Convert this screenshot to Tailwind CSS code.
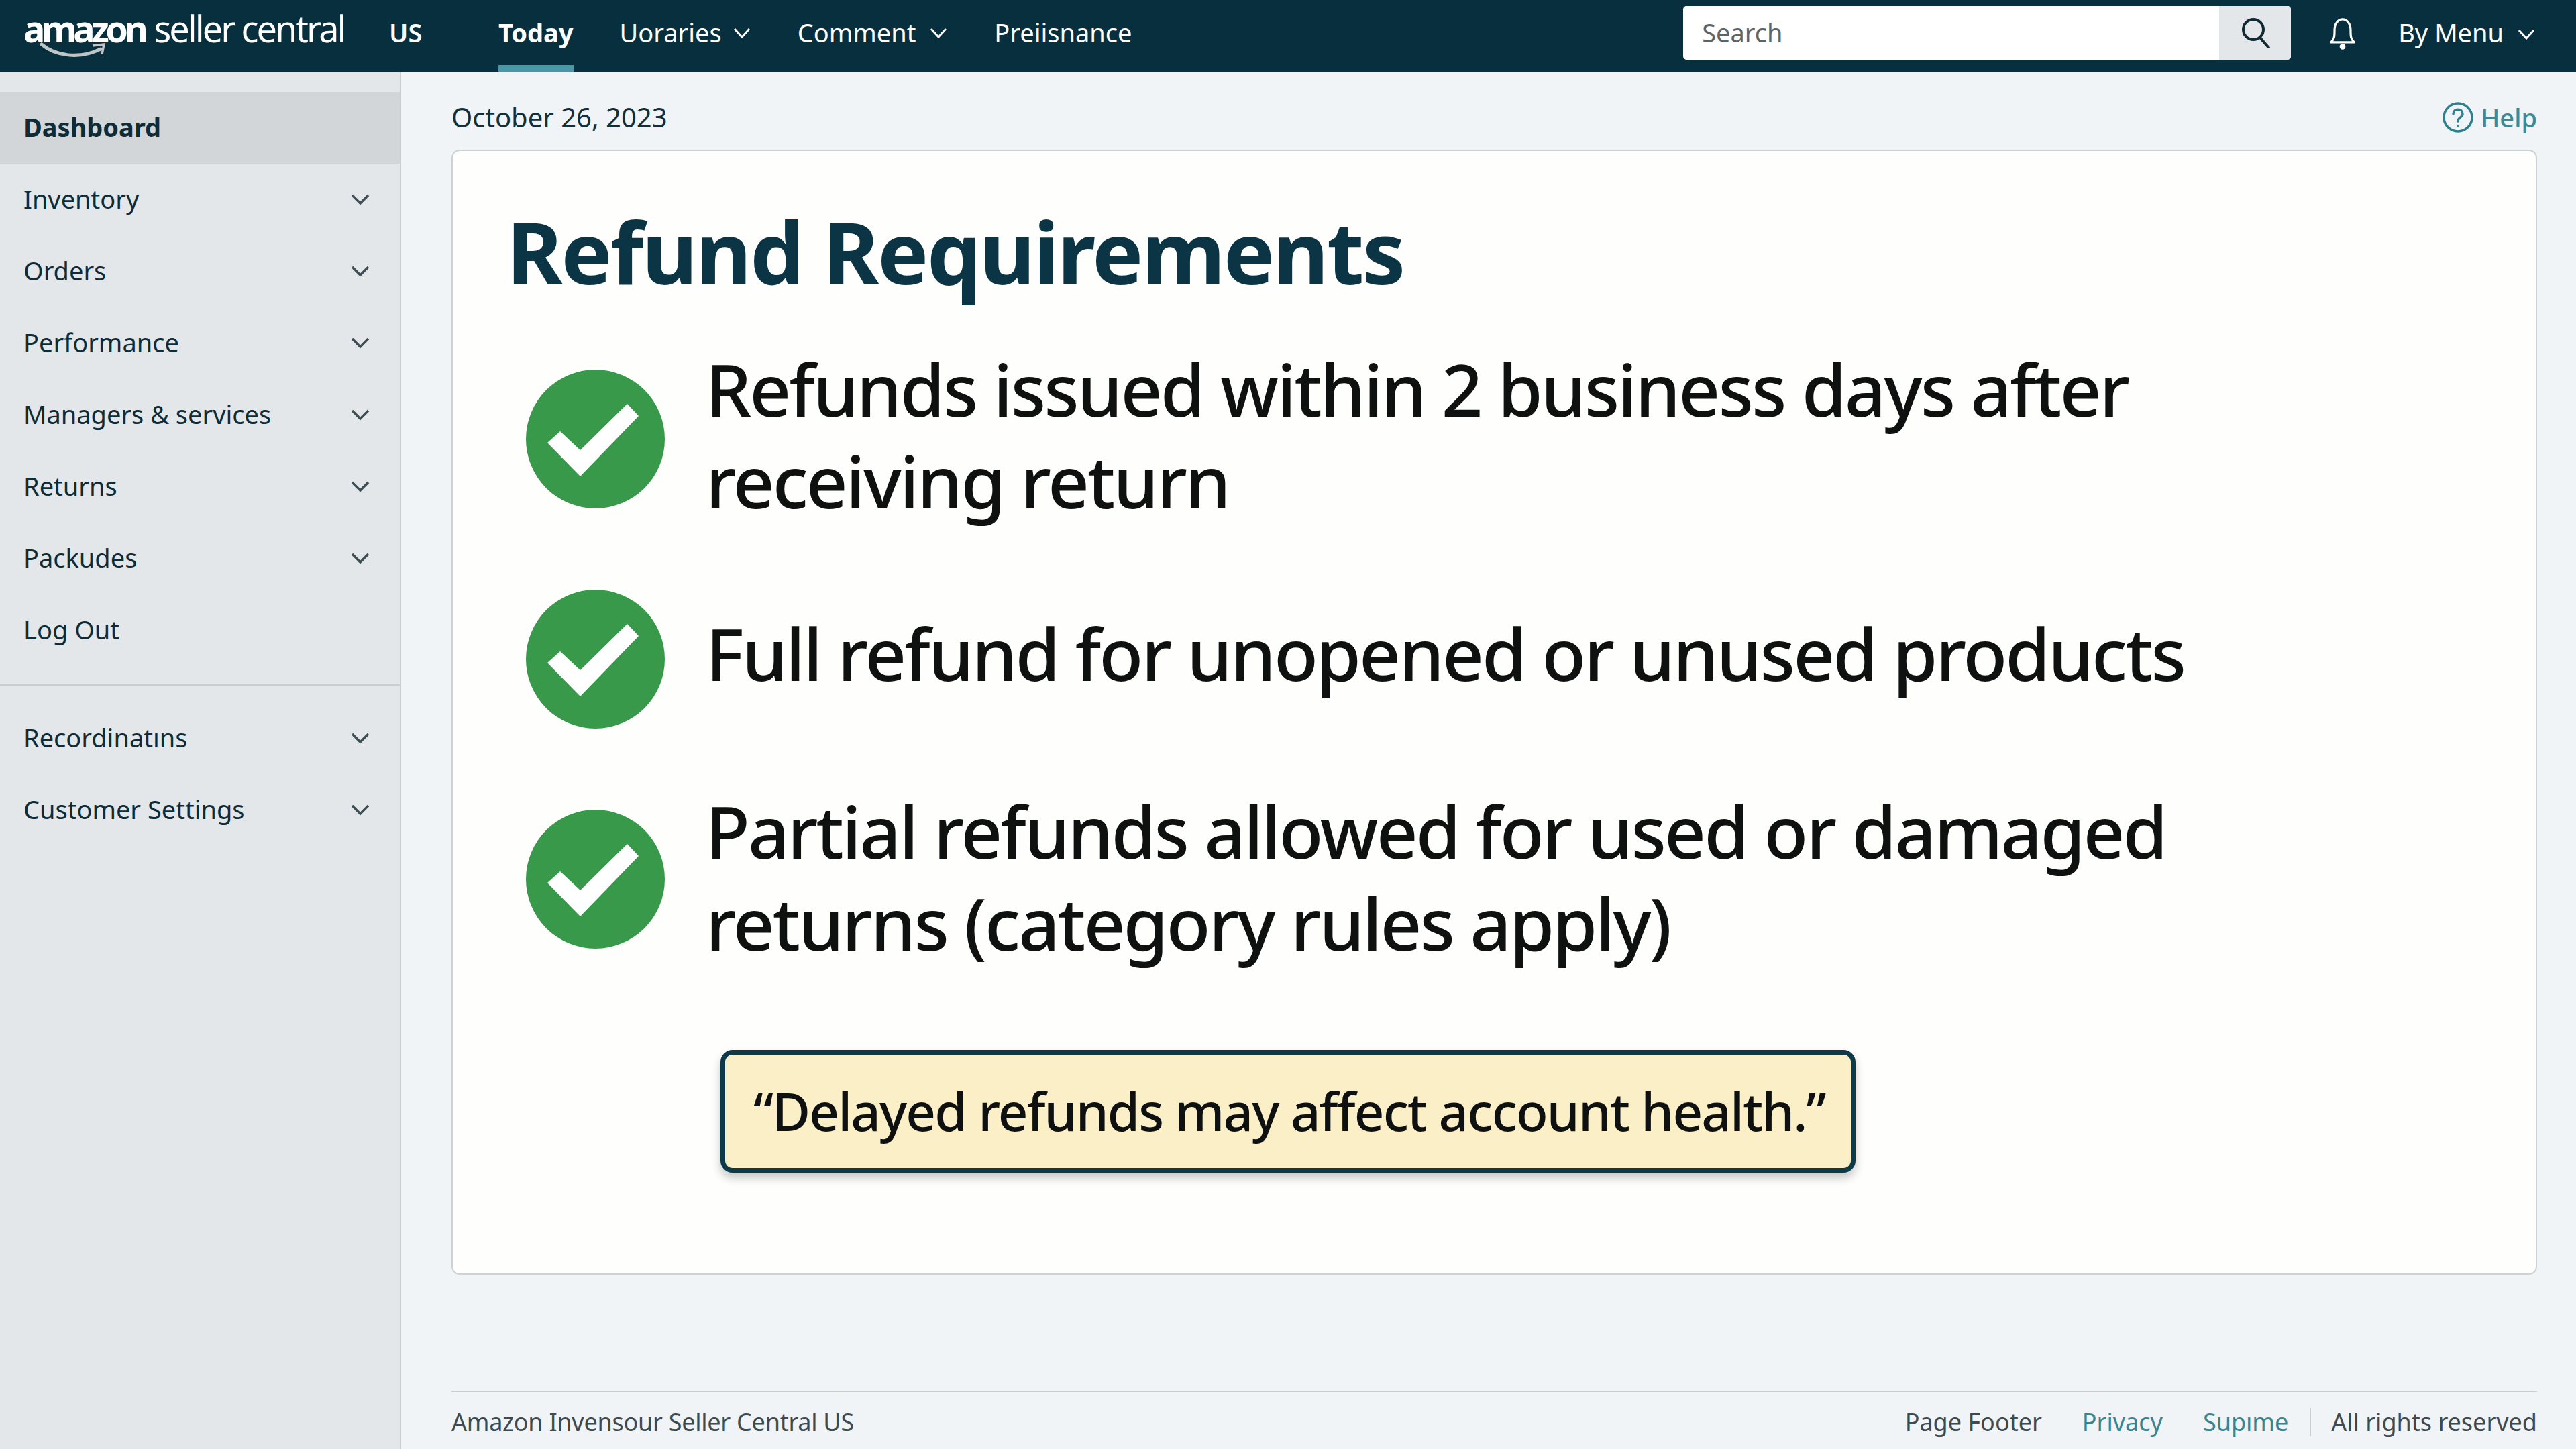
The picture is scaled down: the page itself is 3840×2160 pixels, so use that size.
<!DOCTYPE html>
<html lang="en">
<head>
<meta charset="UTF-8">
<title>Refund Requirements</title>
<script src="https://cdn.jsdelivr.net/npm/@tailwindcss/browser@4"></script>
</head>
<body class="bg-[#f0f4f7] font-['Noto_Sans',sans-serif] text-[#0f1111]">
<div class="flex h-[2160px] w-[3840px] flex-col overflow-hidden">
  <!-- top bar -->
  <header class="flex h-[107px] shrink-0 items-center bg-[#072f3e] text-white">
    <div class="relative mb-[24px] ml-[35px] flex w-[545px] items-baseline gap-[14px] text-[54px] leading-none">
      <span class="font-bold tracking-[-0.1em]">amazon</span><span class="tracking-[-0.055em]">seller central</span>
      <svg class="absolute left-[25px] top-[48px]" width="100" height="26" viewBox="0 0 100 26" fill="none"><path d="M2 3C22 20 58 26 90 10" stroke="#bfc5c7" stroke-width="5" stroke-linecap="round"/><path d="M78 5L95 3L92 18" stroke="#bfc5c7" stroke-width="3.5"/></svg>
    </div>
    <span class="mb-[10px] w-[163px] text-[38px] font-semibold">US</span>
    <nav class="flex h-full items-center gap-[69px] text-[38px]">
      <a class="flex h-full flex-col justify-center border-b-[10px] border-[#4a98a5] font-bold">Today</a>
      <a class="mb-[10px] flex items-center gap-[16px]">Uoraries
        <svg width="28" height="18" viewBox="0 0 28 18" fill="none" stroke="#fff" stroke-width="3"><path d="M3 3l11 12 11-12"/></svg></a>
      <a class="mb-[10px] flex items-center gap-[20px]">Comment
        <svg width="28" height="18" viewBox="0 0 28 18" fill="none" stroke="#fff" stroke-width="3"><path d="M3 3l11 12 11-12"/></svg></a>
      <a class="mb-[10px]">Preiisnance</a>
    </nav>
    <div class="mb-[10px] ml-auto flex h-[80px] w-[906px] overflow-hidden rounded-[5px] bg-white">
      <div class="flex flex-1 items-center pl-[28px] text-[38px] text-[#5b6466]">Search</div>
      <div class="flex w-[107px] items-center justify-center bg-[#e3e7e9]">
        <svg width="46" height="46" viewBox="0 0 46 46" fill="none" stroke="#0f2a33" stroke-width="4"><circle cx="20" cy="18" r="15"/><path d="M30 30l13 15" stroke-linecap="round"/></svg>
      </div>
    </div>
    <svg class="mb-[8px] ml-[54px]" width="46" height="50" viewBox="0 0 50 54" fill="none" stroke="#fff" stroke-width="3.5"><path d="M6 41c6-5 6-10 6-20 0-10 6-17 13-17s13 7 13 17c0 10 0 15 6 20z" stroke-linejoin="round"/><circle cx="25" cy="48" r="3" fill="#fff"/></svg>
    <span class="mb-[10px] ml-[60px] text-[38px]">By Menu</span>
    <svg class="mb-[6px] ml-[20px] mr-[60px]" width="28" height="18" viewBox="0 0 28 18" fill="none" stroke="#fff" stroke-width="3"><path d="M3 3l11 12 11-12"/></svg>
  </header>
  <div class="flex min-h-0 flex-1">
    <!-- sidebar -->
    <aside class="w-[598px] shrink-0 border-r-2 border-[#c9ced1] bg-[#e3e7e9] pt-[30px] text-[38px] text-[#0e2c38]">
      <a class="flex h-[107px] items-center bg-[#d2d6d8] pb-[2px] pl-[35px] font-bold">Dashboard</a>
      <a class="flex h-[107px] items-center justify-between pb-[2px] pl-[35px] pr-[44px]">Inventory
        <svg width="30" height="18" viewBox="0 0 30 18" fill="none" stroke="#3d4e55" stroke-width="3.5"><path d="M3 3l12 12 12-12"/></svg></a>
      <a class="flex h-[107px] items-center justify-between pb-[2px] pl-[35px] pr-[44px]">Orders
        <svg width="30" height="18" viewBox="0 0 30 18" fill="none" stroke="#3d4e55" stroke-width="3.5"><path d="M3 3l12 12 12-12"/></svg></a>
      <a class="flex h-[107px] items-center justify-between pb-[2px] pl-[35px] pr-[44px]">Performance
        <svg width="30" height="18" viewBox="0 0 30 18" fill="none" stroke="#3d4e55" stroke-width="3.5"><path d="M3 3l12 12 12-12"/></svg></a>
      <a class="flex h-[107px] items-center justify-between pb-[2px] pl-[35px] pr-[44px]">Managers &amp; services
        <svg width="30" height="18" viewBox="0 0 30 18" fill="none" stroke="#3d4e55" stroke-width="3.5"><path d="M3 3l12 12 12-12"/></svg></a>
      <a class="flex h-[107px] items-center justify-between pb-[2px] pl-[35px] pr-[44px]">Returns
        <svg width="30" height="18" viewBox="0 0 30 18" fill="none" stroke="#3d4e55" stroke-width="3.5"><path d="M3 3l12 12 12-12"/></svg></a>
      <a class="flex h-[107px] items-center justify-between pb-[2px] pl-[35px] pr-[44px]">Packudes
        <svg width="30" height="18" viewBox="0 0 30 18" fill="none" stroke="#3d4e55" stroke-width="3.5"><path d="M3 3l12 12 12-12"/></svg></a>
      <a class="flex h-[107px] items-center pb-[2px] pl-[35px]">Log Out</a>
      <div class="mt-[27px] border-t-2 border-[#c9ced1] pt-[24px]">
        <a class="flex h-[107px] items-center justify-between pl-[35px] pr-[44px]">Recordinatıns
          <svg width="30" height="18" viewBox="0 0 30 18" fill="none" stroke="#3d4e55" stroke-width="3.5"><path d="M3 3l12 12 12-12"/></svg></a>
        <a class="flex h-[107px] items-center justify-between pl-[35px] pr-[44px]">Customer Settings
          <svg width="30" height="18" viewBox="0 0 30 18" fill="none" stroke="#3d4e55" stroke-width="3.5"><path d="M3 3l12 12 12-12"/></svg></a>
      </div>
    </aside>
    <!-- main -->
    <main class="flex min-w-0 flex-1 flex-col pl-[75px] pr-[58px]">
      <div class="flex h-[116px] shrink-0 items-center justify-between pt-[20px] text-[38px]">
        <span class="text-[40px] text-[#12303b]">October 26, 2023</span>
        <a class="flex items-center gap-[10px] font-medium text-[#3d8a97]">
          <svg width="48" height="48" viewBox="0 0 48 48" fill="none" stroke="#2c7f8c" stroke-width="3.5"><circle cx="24" cy="24" r="21"/><path d="M17 19c0-9 14-9 14 0 0 5-7 5-7 11" stroke-linecap="round"/><circle cx="24" cy="37" r="2" fill="#2c7f8c" stroke="none"/></svg>
          Help</a>
      </div>
      <section class="h-[1677px] shrink-0 rounded-[12px] border-2 border-[#cdd2d5] bg-[#fefefd] pl-[81px] pt-[73px]">
        <h1 class="-ml-[1px] text-[128px] font-bold leading-[1.2] tracking-[-0.021em] text-[#0b3545]">Refund Requirements</h1>
        <ul class="mt-[54px] text-[108px] font-medium leading-[137px] tracking-[-0.027em]">
          <li class="flex h-[328px] items-start gap-[61px]">
            <svg class="ml-[28px] mt-[45px] shrink-0" width="207" height="207" viewBox="0 0 207 207"><circle cx="103.5" cy="103.5" r="103.5" fill="#38994a"/><polygon points="32,109 51,92 81,120 151,51 168,69 81,159" fill="#fff"/></svg>
            <span class="pt-[5px]">Refunds issued within 2 business days after<br>receiving return</span>
          </li>
          <li class="flex h-[328px] items-start gap-[61px]">
            <svg class="ml-[28px] mt-[45px] shrink-0" width="207" height="207" viewBox="0 0 207 207"><circle cx="103.5" cy="103.5" r="103.5" fill="#38994a"/><polygon points="32,109 51,92 81,120 151,51 168,69 81,159" fill="#fff"/></svg>
            <span class="pt-[71px]">Full refund for unopened or unused products</span>
          </li>
          <li class="flex h-[328px] items-start gap-[61px]">
            <svg class="ml-[28px] mt-[45px] shrink-0" width="207" height="207" viewBox="0 0 207 207"><circle cx="103.5" cy="103.5" r="103.5" fill="#38994a"/><polygon points="32,109 51,92 81,120 151,51 168,69 81,159" fill="#fff"/></svg>
            <span class="pt-[8px]">Partial refunds allowed for used or damaged<br>returns (category rules apply)</span>
          </li>
        </ul>
        <div class="ml-[318px] mt-[75px] flex h-[183px] w-[1692px] items-center whitespace-nowrap rounded-[18px] border-[7px] border-[#0d3a49] bg-[#fbefc8] pl-[42px] text-[78px] font-medium tracking-[-0.024em] shadow-[0_8px_14px_rgba(0,0,0,0.22)]">“Delayed refunds may affect account health.”</div>
      </section>
      <footer class="mt-auto flex h-[87px] shrink-0 items-center justify-between border-t-2 border-[#c9ced1] pt-[4px] text-[36px] text-[#3d4a4e]">
        <span class="tracking-[-0.007em]">Amazon Invensour Seller Central US</span>
        <div class="flex items-center">
          <span>Page Footer</span>
          <a class="ml-[60px] text-[#38858f]">Privacy</a>
          <a class="ml-[60px] text-[#38858f]">Supıme</a>
          <span class="ml-[32px] h-[42px] border-l-2 border-[#c9ced1]"></span>
          <span class="ml-[30px]">All rights reserved</span>
        </div>
      </footer>
    </main>
  </div>
</div>
</body>
</html>
